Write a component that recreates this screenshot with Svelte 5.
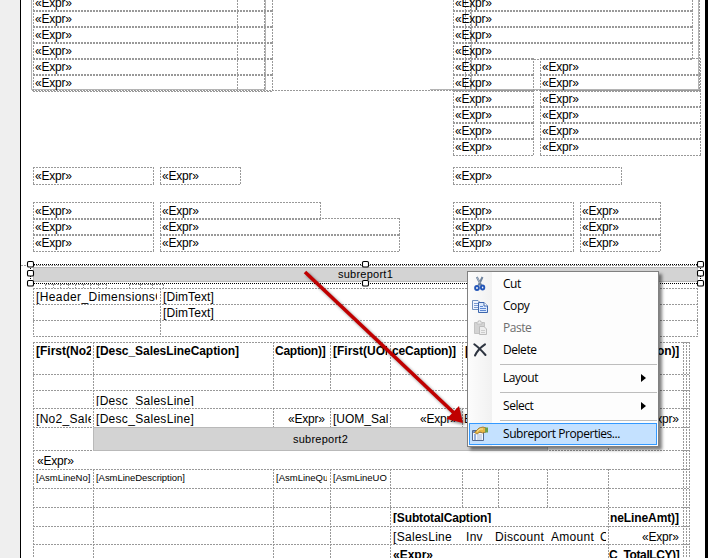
<script>
  const E = '«Expr»';
  const box = (x, y, r) => ({ x, y, w: r - x + 1 });
  const boxes = [
    ...[-6, 10, 26, 42, 58, 74].map((y) => box(33, y, 272)),
    ...[-6, 10, 26, 42].map((y) => box(453, y, 692)),
    ...[58, 74, 90, 106, 122, 138].flatMap((y) => [box(453, y, 533), box(540, y, 700)]),
    box(33, 167, 153), box(160, 167, 240), box(453, 167, 621),
    box(33, 202, 153), box(160, 202, 320), box(453, 202, 573), box(580, 202, 660),
    ...[218, 234].flatMap((y) => [box(33, y, 153), box(160, y, 399), box(453, y, 573), box(580, y, 660)])
  ];

  // Report table rules: [x1, y1, x2, y2]
  const rules = [
    ...[288, 304, 320, 336].map((y) => [33, y, 698, y]),
    [33, 288, 33, 336], [160, 288, 160, 336], [697, 288, 697, 336],
    ...[342, 374, 390, 408, 427].map((y) => [33, y, 690, y]),
    ...[450, 469, 488, 507, 526, 544].map((y) => [33, y, 690, y]),
    ...[33, 683, 686, 689].map((x) => [x, 342, x, 558]),
    [93, 342, 93, 427], [93, 469, 93, 558],
    ...[273, 330, 390, 462, 608].flatMap((x) => [[x, 342, x, 390], [x, 408, x, 427]]),
    ...[273, 330, 390, 608].map((x) => [x, 469, x, 558]),
    ...[462, 498, 547].map((x) => [x, 469, x, 507]),
    [608, 427, 608, 450],
    [21, 265, 705, 265],
    [45, 284, 107, 284], [129, 284, 163, 284],
    ...[45, 53, 60, 68, 75, 83, 90, 98, 106, 129, 140, 152, 163].map((x) => [x, 284, x, 288])
  ];

  // x, baseline, visible width, text, letter spacing, style, visible height
  const labels = [
    [36, 301, 121, '[Header_DimensionsC', 0.4],
    [163, 301, 80, '[DimText]', 0.1],
    [163, 317, 80, '[DimText]', 0.1],
    [36, 355, 55, '[First(No2', 0, 'bold'],
    [96, 355, 170, '[Desc_SalesLineCaption]', -0.05, 'bold'],
    [275, 355, 54, 'Caption)]', -0.25, 'bold'],
    [333, 355, 54, '[First(UOM', 0, 'bold'],
    [392, 355, 68, 'ceCaption)]', -0.2, 'bold'],
    [465, 355, 20, '[F', 0, 'bold'],
    [657, 355, 24, 'on)]', -0.1, 'bold'],
    [96, 405, 150, '[Desc_SalesLine]', 0.3, '', 12],
    [36, 423, 55, '[No2_Sale', 0.3],
    [96, 423, 150, '[Desc_SalesLine]', 0.3],
    [288, 423, 42, E, -0.2],
    [333, 423, 55, '[UOM_Sal', 0],
    [420, 423, 42, E, -0.2],
    [464, 423, 20, 'Ex', 0],
    [642, 423, 42, E, -0.2],
    [37, 465, 60, E, -0.2],
    [36, 481, 56, '[AsmLineNo]', 0, 'small'],
    [96, 481, 120, '[AsmLineDescription]', -0.05, 'small'],
    [276, 481, 51, '[AsmLineQu', 0, 'small'],
    [333, 481, 54, '[AsmLineUOI', 0, 'small'],
    [393, 522, 110, '[SubtotalCaption]', -0.15, 'bold', 12],
    [610, 522, 72, 'neLineAmt)]', -0.1, 'bold'],
    [393, 541, 70, '[SalesLine', 0.3],
    [466, 541, 25, 'Inv', 0.3],
    [495, 541, 55, 'Discount', 0.3],
    [551, 541, 48, 'Amount', 0.3],
    [600, 541, 6, 'C', 0],
    [642, 541, 42, E, -0.2],
    [393, 559, 60, E, 0, 'bold'],
    [609, 559, 75, 'C_TotalLCY)]', -0.4, 'bold']
  ];

  const handles = [[27, 261], [27, 270], [27, 280], [362, 261], [362, 280], [697, 261], [697, 270], [697, 280]];

  const menu = [
    { t: 'Cut', icon: 'cut' },
    { t: 'Copy', icon: 'copy' },
    { t: 'Paste', icon: 'paste', off: true },
    { t: 'Delete', icon: 'delete' },
    null,
    { t: 'Layout', sub: true },
    null,
    { t: 'Select', sub: true },
    null,
    { t: 'Subreport Properties...', icon: 'props', hot: true }
  ];
</script>

<div class="designer">
  <div class="gutter"></div>
  <div class="page"></div>
  <div class="edge"></div>

  <div class="layer">
    <svg class="art" width="708" height="558" shape-rendering="crispEdges">
      <g fill="none" stroke="#b4b4b4">
        <path d="M31.5 0V89.500H265M265.500 0V89.500M430 89.500H700M471.500 0V89M698.500 0V90" />
      </g>
      <g fill="none" stroke="#999" stroke-dasharray="2 1">
        <path d="M32 90.500H700M237.500 0V90M264.500 0V90M465.500 0V90M470.500 0V90M699.500 0V90" />
        {#each rules as [a, b, c, d]}
          <path d={b === d ? `M${a} ${b + 0.5}H${c}` : `M${a + 0.5} ${b}V${d}`} />
        {/each}
      </g>
    </svg>

    {#each boxes as b}
      <div class="textbox" style="left:{b.x}px;top:{b.y}px;width:{b.w}px">{E}</div>
    {/each}

    {#each labels as [x, b, w, s, ls, kind = '', h = 15]}
      <div class="label {kind}" style="left:{x}px;top:{b - 11}px;width:{w}px;height:{h}px;letter-spacing:{ls}px">{s}</div>
    {/each}

    <div class="subreport one">subreport1</div>
    <div class="subreport two">subreport2</div>

    <svg class="art" width="708" height="558">
      <g shape-rendering="crispEdges" stroke="#000" stroke-dasharray="1 1">
        <path d="M30 264.500H701M30 283.500H701M30.500 264V284M700.500 264V284" />
      </g>
      {#each handles as [x, y]}
        <rect x={x + 0.5} y={y + 0.5} width="6" height="5.5" rx="1.3" fill="#fff" stroke="#000" stroke-width="1.1" />
      {/each}
    </svg>
  </div>

  <svg class="art arrow" width="708" height="558">
    <path d="M305 272L454 413" stroke="#c00000" stroke-width="3.600" />
    <path d="M463 423L446.500 419L459 406Z" fill="#c00000" />
  </svg>

  <div class="menu">
    {#each menu as m}
      {#if m}
        <div class="item" class:hot={m.hot} class:off={m.off}>
          <span class="icon">
            {#if m.icon === 'cut'}
              <svg width="16" height="16" fill="none">
                <path d="M4.800 1L9.300 9.500M10.500 1L6.500 9.500" stroke="#6e829d" stroke-width="2" />
                <path d="M5.200 1.500L8 7" stroke="#c3cfdd" stroke-width=".7" />
                <ellipse cx="5" cy="12" rx="1.900" ry="2" stroke="#2456b8" stroke-width="1.900" />
                <ellipse cx="10.600" cy="11.500" rx="1.700" ry="2" stroke="#2456b8" stroke-width="1.900" />
              </svg>
            {:else if m.icon === 'copy'}
              <svg width="16" height="16">
                <path d="M.5 2.500H6L8.500 5V11.500H.5Z" fill="#eef4fd" stroke="#6f8fbd" />
                <path d="M2 5.500H6M2 7.500H6M2 9.500H6" stroke="#7b9bd1" />
                <path d="M6.500 4.500H12L15.500 8V14.500H6.500Z" fill="#dce9fc" stroke="#3d66ad" />
                <path d="M12 4.500V8H15.500" fill="#fff" stroke="#3d66ad" />
                <path d="M8 8.500H11M8 10.500H14M8 12.500H14" stroke="#5d87d2" />
              </svg>
            {:else if m.icon === 'paste'}
              <svg width="16" height="16">
                <path d="M2.500 2.500H12.500V13.500H2.500Z" fill="#d3d3d3" stroke="#c3c3c3" />
                <path d="M5 4V2H6.500V.8H8.500V2H10V4Z" fill="#eee" stroke="#bbb" stroke-width=".8" />
                <path d="M7.500 6.500H12L14.500 9V14.500H7.500Z" fill="#eee" stroke="#bcbcbc" />
                <path d="M9 10.500H13M9 12.500H13" stroke="#ccc" />
              </svg>
            {:else if m.icon === 'delete'}
              <svg width="16" height="16" fill="none" stroke="#2d3440" stroke-linecap="round">
                <path d="M2.300 2.300C6 5 10 9 13.500 13" stroke-width="2" />
                <path d="M13 2.300C9 5 5 9 3 13.500" stroke-width="2" />
              </svg>
            {:else if m.icon === 'props'}
              <svg width="16" height="16">
                <path d="M.5 4.500H11.500V14.500H.5Z" fill="#f5f8ff" stroke="#54698f" />
                <path d="M1 6H11" stroke="#6f90cb" stroke-width="2" />
                <path d="M2 9H4M2 11H4M2 13H4" stroke="#3264b8" />
                <path d="M5 9H10M5 11H10M5 13H10" stroke="#aab9d2" />
                <path d="M2.500 6.500L7 2L11 1L14 2V6L10.500 7L8 6L5 8Z" fill="#e5b646" stroke="#9b722a" stroke-width=".8" />
                <path d="M5 5.500L8 3H11" stroke="#ffe7a0" fill="none" />
                <path d="M13 1.500H16V6.500H13Z" fill="#6da04a" />
              </svg>
            {/if}
          </span>
          <span class="name">{m.t}</span>
          {#if m.sub}<i class="caret"></i>{/if}
        </div>
      {:else}
        <div class="sep"></div>
      {/if}
    {/each}
  </div>
</div>

<style>
  .designer {
    position: relative;
    display: flex;
    width: 708px;
    height: 558px;
    overflow: hidden;
    background: #fff;
    color: #000;
    font: 12px/14px "Liberation Sans", Arial, sans-serif;
  }
  .gutter { width: 20px; background: #efefef; border-right: 1px solid #000; }
  .page { flex: 1; }
  .edge { width: 3px; background: #000; }
  .layer { position: absolute; inset: 0; }
  .art { position: absolute; left: 0; top: 0; }
  .textbox {
    --h: repeating-linear-gradient(90deg, #999 0 2px, transparent 2px 3px);
    --v: repeating-linear-gradient(180deg, #999 0 2px, transparent 2px 3px);
    position: absolute;
    box-sizing: border-box;
    height: 18px;
    padding: 2px 0 0 2px;
    white-space: nowrap;
    letter-spacing: -0.2px;
    background:
      var(--h) left top / 100% 1px no-repeat,
      var(--h) left bottom / 100% 1px no-repeat,
      var(--v) left top / 1px 100% no-repeat,
      var(--v) right top / 1px 100% no-repeat;
  }
  .label { position: absolute; overflow: hidden; white-space: pre; }
  .bold { font-weight: bold; }
  .small { font-size: 9.5px; padding-top: 1px; }
  .subreport {
    position: absolute;
    box-sizing: border-box;
    background: #d3d3d3;
    border: 1px solid #b9b9b9;
    text-align: center;
    font-size: 11px;
    letter-spacing: 0.25px;
  }
  .one { left: 33px; top: 267px; width: 665px; height: 15px; line-height: 13px; }
  .two { left: 93px; top: 427px; width: 455px; height: 24px; line-height: 22px; }
  .arrow { filter: drop-shadow(2px 2px 1.5px rgba(0, 0, 0, 0.45)); }
  .menu {
    position: absolute;
    left: 467px;
    top: 271px;
    box-sizing: border-box;
    width: 192px;
    height: 176px;
    padding: 1px;
    display: flex;
    flex-direction: column;
    border: 1px solid #808080;
    background: linear-gradient(90deg, #fcfcfc, #f1f1f1 24px, #fdfdfd 24px);
    box-shadow: 3px 3px 3px rgba(0, 0, 0, 0.5);
    font-family: "Open Sans", "Noto Sans", sans-serif;
    font-size: 12px;
  }
  .item {
    display: flex;
    align-items: center;
    height: 22px;
    box-sizing: border-box;
    border: 1px solid transparent;
    padding: 0 10px 0 2px;
  }
  .hot { background: #c4e1ff; border-color: #3399ff; }
  .off { color: #6d6d6d; }
  .icon { display: flex; width: 16px; height: 16px; margin-right: 15px; }
  .name { flex: 1; white-space: nowrap; letter-spacing: -0.45px; }
  .caret { border-left: 5px solid #000; border-top: 4px solid transparent; border-bottom: 4px solid transparent; }
  .sep { height: 6px; margin-left: 31px; background: linear-gradient(#bdbdbd, #bdbdbd) 0 3px / 100% 1px no-repeat; }
</style>
